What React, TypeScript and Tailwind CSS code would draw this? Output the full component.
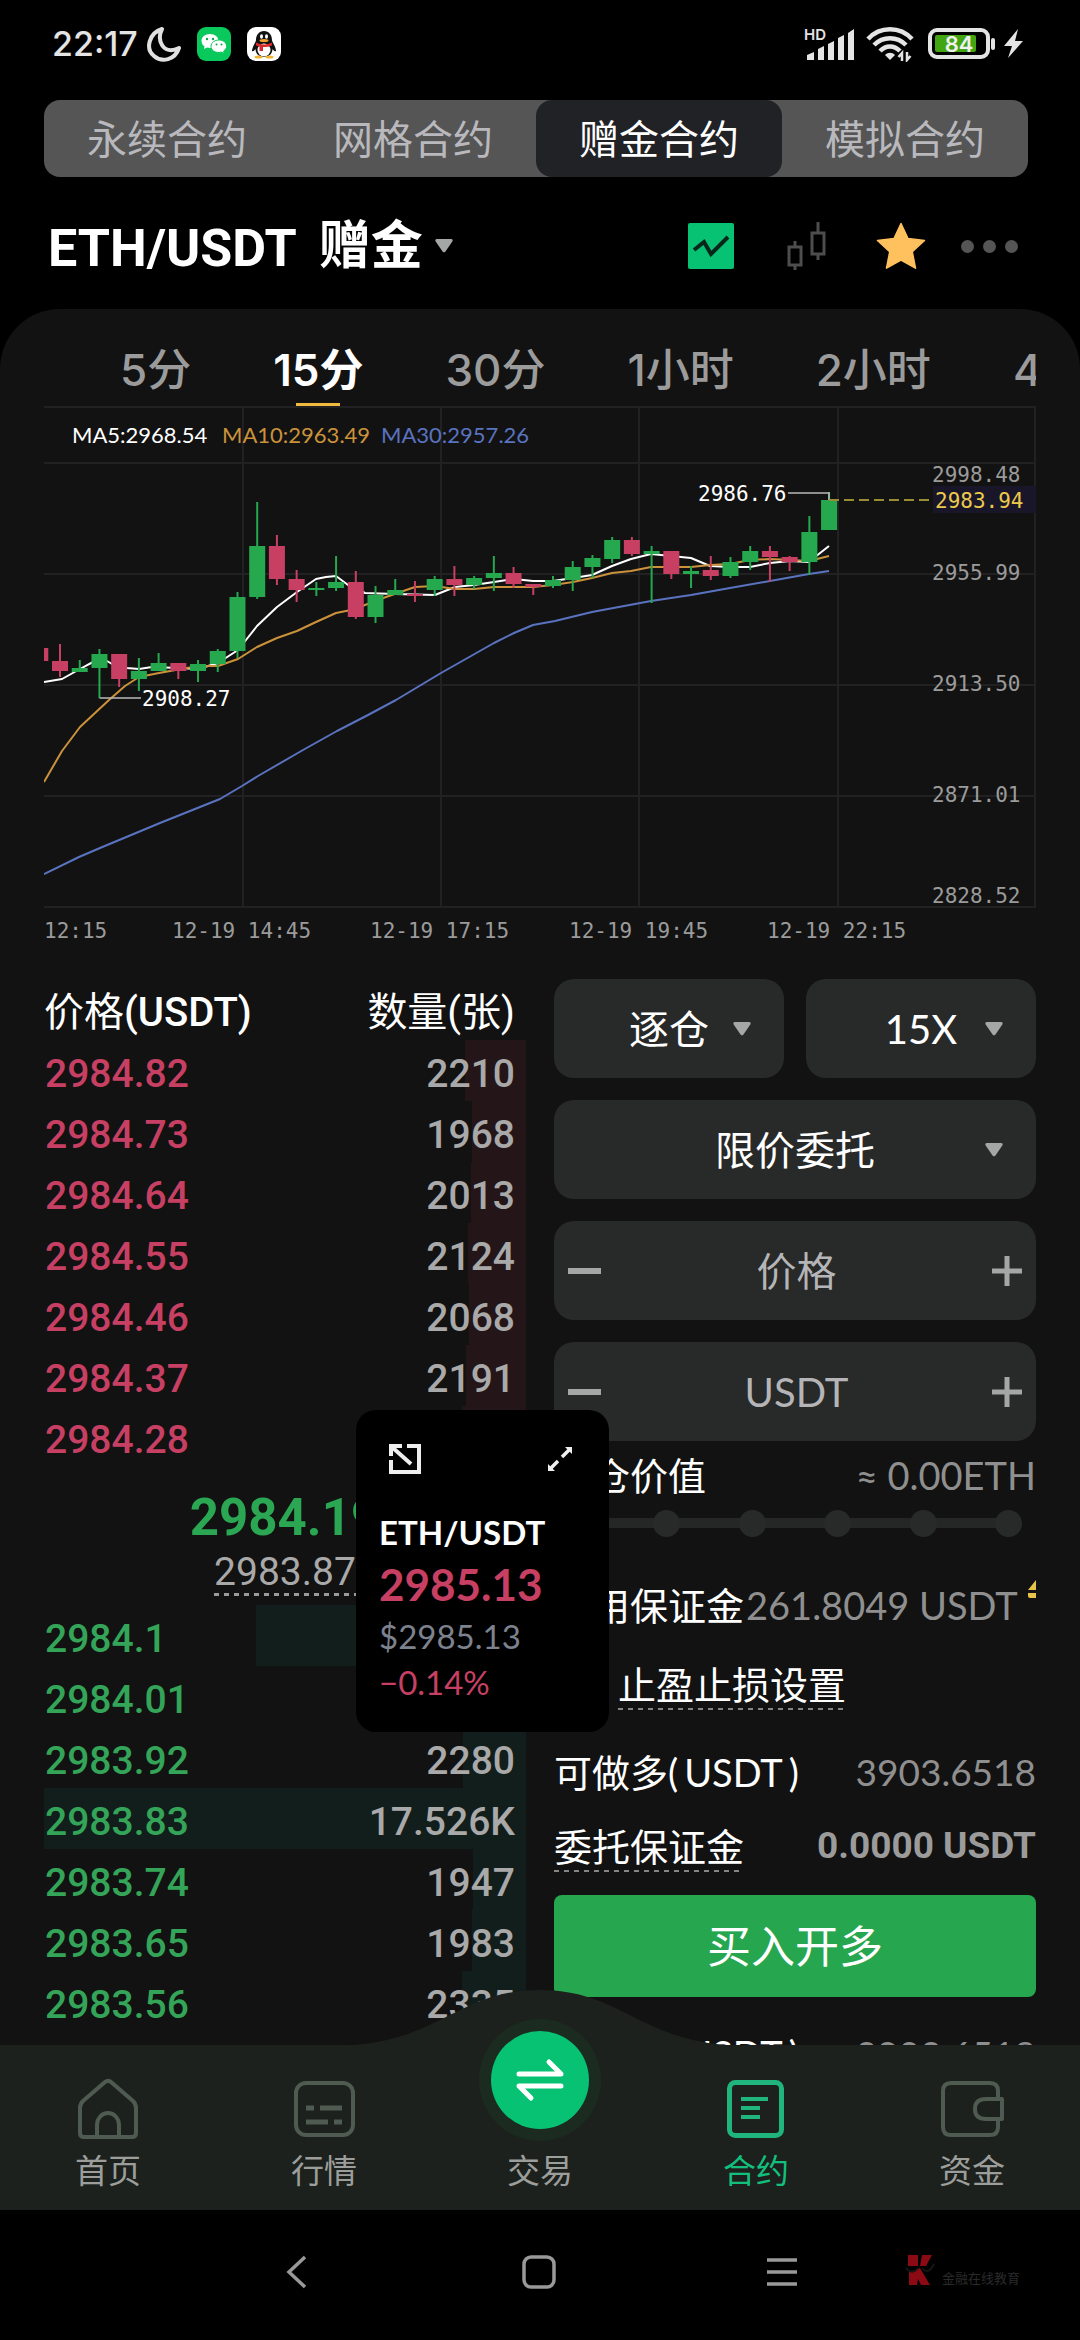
import React from "react";

type Level = { price: string; amount: string; depth: number };

const asks: Level[] = [
  { price: "2984.82", amount: "2210", depth: 12.6 },
  { price: "2984.73", amount: "1968", depth: 11.2 },
  { price: "2984.64", amount: "2013", depth: 11.5 },
  { price: "2984.55", amount: "2124", depth: 12.1 },
  { price: "2984.46", amount: "2068", depth: 11.8 },
  { price: "2984.37", amount: "2191", depth: 12.5 },
  { price: "2984.28", amount: "", depth: 13.3 },
];

const bids: Level[] = [
  { price: "2984.1", amount: "", depth: 56 },
  { price: "2984.01", amount: "", depth: 12 },
  { price: "2983.92", amount: "2280", depth: 13 },
  { price: "2983.83", amount: "17.526K", depth: 100 },
  { price: "2983.74", amount: "1947", depth: 11 },
  { price: "2983.65", amount: "1983", depth: 11.2 },
  { price: "2983.56", amount: "2335", depth: 13.3 },
];

// up, wick top, body top, body bottom, wick bottom
const candles: [boolean, number, number, number, number][] = [
  [false, 648, 648, 661, 661],
  [false, 644, 661, 671, 677],
  [true, 660, 668, 672, 672],
  [true, 649, 654, 668, 698],
  [false, 654, 654, 679, 687],
  [true, 658, 671, 679, 691],
  [true, 653, 663, 671, 671],
  [false, 663, 663, 671, 679],
  [true, 660, 664, 671, 682],
  [true, 649, 651, 664, 672],
  [true, 592, 597, 651, 658],
  [true, 502, 546, 597, 599],
  [false, 535, 546, 579, 585],
  [false, 570, 579, 590, 602],
  [true, 582, 588, 590, 596],
  [true, 556, 582, 588, 591],
  [false, 571, 582, 617, 619],
  [true, 586, 595, 617, 623],
  [true, 579, 590, 595, 595],
  [false, 581, 594, 596, 602],
  [true, 576, 579, 590, 596],
  [false, 566, 579, 585, 596],
  [true, 576, 578, 585, 589],
  [true, 556, 573, 578, 591],
  [false, 567, 573, 584, 588],
  [false, 584, 584, 587, 595],
  [true, 576, 580, 586, 588],
  [true, 561, 567, 580, 591],
  [true, 555, 558, 567, 578],
  [true, 537, 540, 559, 563],
  [false, 537, 540, 554, 556],
  [true, 546, 551, 554, 603],
  [false, 551, 551, 574, 579],
  [true, 566, 571, 574, 588],
  [false, 556, 570, 576, 580],
  [true, 557, 562, 576, 578],
  [true, 546, 551, 562, 570],
  [false, 546, 551, 557, 582],
  [false, 556, 557, 562, 571],
  [true, 516, 532, 562, 575],
  [true, 492, 500, 530, 530],
];

const ma5 =
  "44,682 62,679 80,669 93,662 107,661 112,664 127,668 139,669 152,667 179,668 198,669 218,663 238,650 246,640 257,626 277,607 297,592 316,579 326,577 336,576 348,585 365,593 395,594 435,595 455,587 474,585 494,582 514,579 533,581 553,581 573,578 592,575 612,566 631,559 651,554 671,556 691,558 710,566 730,567 750,567 770,563 790,561 809,562 815,557 829,546";
const ma10 =
  "44,782 62,751 80,727 95,713 109,700 125,686 139,677 159,673 198,666 218,666 238,659 257,647 277,638 297,631 316,622 336,613 356,609 365,605 386,597 415,587 435,586 455,589 474,589 494,587 533,587 553,585 573,582 592,578 612,573 631,571 651,567 691,567 710,565 730,564 750,560 770,559 790,560 809,561 829,556";
const ma30 =
  "44,874 79,857 100,848 160,823 220,799 242,786 258,776 303,750 337,731 368,715 396,700 441,673 494,643 514,633 533,625 555,621 592,612 651,601 691,595 730,588 770,581 809,574 829,571";

const MONO = '"DejaVu Sans Mono", monospace';

function Chart() {
  return (
    <svg viewBox="44 406 992 549" className="block w-full" role="img" aria-label="ETH/USDT 15分">
      <g stroke="#212124" strokeWidth="2">
        {[407, 463, 574, 685, 796, 907].map((y) => (
          <line key={y} x1="44" x2="1036" y1={y} y2={y} />
        ))}
        {[243, 441, 639, 838, 1035].map((x) => (
          <line key={x} x1={x} x2={x} y1="407" y2="907" />
        ))}
      </g>
      <g fontFamily='Lato, "Noto Sans CJK SC", sans-serif' fontSize="22">
        <text x="72" y="443" fill="#ffffff">MA5:2968.54</text>
        <text x="222" y="443" fill="#cb923b">MA10:2963.49</text>
        <text x="381" y="443" fill="#5a73c0">MA30:2957.26</text>
      </g>
      <g fill="none" strokeWidth="2" strokeLinejoin="round">
        <polyline points={ma5} stroke="#ffffff" />
        <polyline points={ma10} stroke="#cb923b" />
        <polyline points={ma30} stroke="#5a73c0" />
      </g>
      {candles.map(([up, wt, bt, bb, wb], i) => {
        const x = 60 + 19.72 * (i - 1);
        const c = up ? "#26a84f" : "#c74063";
        return (
          <g key={i} fill={c}>
            {i > 0 && <rect x={x - 1} y={wt} width="2" height={wb - wt} />}
            <rect x={x - 8} y={bt} width="16" height={Math.max(bb - bt, 2)} />
          </g>
        );
      })}
      <path d="M99.500 698H141M788 493H829V500" fill="none" stroke="#b9b9b9" strokeWidth="1.500" />
      <path d="M829 500H931" stroke="#9c8b35" strokeWidth="2" strokeDasharray="10 5" />
      <rect x="933" y="486" width="103" height="27" fill="#1a1629" />
      <g fontFamily={MONO} fontSize="21">
        <g fill="#ffffff">
          <text x="142" y="706">2908.27</text>
          <text x="698" y="501">2986.76</text>
        </g>
        <text x="935" y="508" fill="#ecc94b">2983.94</text>
        <g fill="#9b9b9b">
          <text x="932" y="482">2998.48</text>
          <text x="932" y="580">2955.99</text>
          <text x="932" y="691">2913.50</text>
          <text x="932" y="802">2871.01</text>
          <text x="932" y="903">2828.52</text>
          <text x="44" y="938">12:15</text>
          <text x="172" y="938">12-19 14:45</text>
          <text x="370" y="938">12-19 17:15</text>
          <text x="569" y="938">12-19 19:45</text>
          <text x="767" y="938">12-19 22:15</text>
        </g>
      </g>
    </svg>
  );
}

function StatusBar() {
  return (
    <div className="flex h-[100px] items-start justify-between pt-[24px] pr-[56px] pl-[52px]">
      <div className="flex items-center">
        <span className="text-[34px] leading-10 font-medium text-[#e4e4e4]">22:17</span>
        <svg className="ml-2 h-9 w-9" viewBox="0 0 36 36" fill="none" stroke="#e0e0e0" strokeWidth="4" strokeLinejoin="round">
          <path d="M16 3C3 7-1 23 8 30c8 7 21 4 25-8-8 4-14 2-17-3s-3-10 0-16z" />
        </svg>
        <svg className="ml-3.5 h-9 w-9" viewBox="0 0 36 36">
          <rect x="1" y="1" width="34" height="34" rx="9" fill="#09c85c" />
          <path d="M14 8c-5 0-8.500 3-8.500 7 0 2 1 4 3 5.200L8 23l3-1.500 3 .5c5 0 8.500-3 8.500-7S19 8 14 8z" fill="#fff" />
          <path d="M23 14c-4.500 0-8 2.700-8 6.300S18.500 26.500 23 26.500l2.400-.4 2.800 1.400-.6-2.500c1.900-1.200 3-2.800 3-4.700C30.600 16.700 27.300 14 23 14z" fill="#fff" stroke="#09c85c" strokeWidth="1" />
          <g fill="#09a84e">
            <circle cx="11" cy="13" r="1.200" /><circle cx="17" cy="13" r="1.200" />
            <circle cx="20.500" cy="18.500" r="1" /><circle cx="25.500" cy="18.500" r="1" />
          </g>
        </svg>
        <svg className="ml-3.5 h-9 w-9" viewBox="0 0 36 36">
          <rect x="1" y="1" width="34" height="34" rx="9" fill="#fff" />
          <path d="M18 5c-5 0-8 4-8 9 0 2-4 7-4 11 1.500 1 2.500-1 3.500-2 0 5 4 8 8.500 8s8.500-3 8.500-8c1 1 2 3 3.500 2 0-4-4-9-4-11 0-5-3-9-8-9z" fill="#111" />
          <ellipse cx="18" cy="24" rx="6.500" ry="6.500" fill="#fff" />
          <ellipse cx="12.500" cy="31" rx="4" ry="1.500" fill="#f2b632" />
          <ellipse cx="23.500" cy="31" rx="4" ry="1.500" fill="#f2b632" />
          <ellipse cx="15.500" cy="10.500" rx="1.500" ry="2.200" fill="#fff" />
          <ellipse cx="20.500" cy="10.500" rx="1.500" ry="2.200" fill="#fff" />
          <ellipse cx="18" cy="14.500" rx="4.500" ry="1.500" fill="#f2a032" />
          <path d="M10 16.500c5 2.500 11 2.500 16 0v3c-3 1.300-6 1.800-9 1.500v4h-3.500v-4.500L10 19.500z" fill="#d8282c" />
        </svg>
      </div>
      <div className="flex items-center pt-0.5">
        <svg className="h-9 w-[52px]" viewBox="0 0 52 36">
          <text x="0" y="14" fontFamily="Inter, sans-serif" fontSize="15" fontWeight="600" fill="#e4e4e4">HD</text>
          <g fill="#e4e4e4">
            <path d="M3 29l7-3v8H3zM14 23l6-3v14h-6zM24 18l6-3v19h-6zM34 12l6-3v25h-6zM44 7l6-4v31h-6z" />
          </g>
        </svg>
        <svg className="ml-2.5 h-9 w-12" viewBox="0 0 48 36">
          <g fill="none" stroke="#e4e4e4" strokeWidth="4.500">
            <path d="M2 13c12-13 32-13 44 0" />
            <path d="M8 19c9-9 23-9 32 0" />
            <path d="M14 25c6-6 14-6 20 0" />
          </g>
          <path d="M24 34l-5-5c3-3 7-3 10 0z" fill="#e4e4e4" />
          <path d="M36 35v-8l-3.500 4M41 26v8l3.500-4" fill="none" stroke="#e4e4e4" strokeWidth="2.500" />
        </svg>
        <svg className="ml-3 h-9 w-[98px]" viewBox="0 0 98 36">
          <rect x="4" y="4" width="58" height="27" rx="7" fill="none" stroke="#e4e4e4" strokeWidth="4" />
          <rect x="9" y="9" width="41" height="17" rx="2" fill="#43a512" />
          <path d="M67 14v8" stroke="#e4e4e4" strokeWidth="4" strokeLinecap="round" />
          <text x="33" y="26" textAnchor="middle" fontFamily="Inter, sans-serif" fontSize="22" fontWeight="600" fill="#f0f0f0">84</text>
          <path d="M92 3L78 20h8l-4 12 15-17h-8z" fill="#e4e4e4" />
        </svg>
      </div>
    </div>
  );
}

function Caret() {
  return (
    <svg className="h-3.5 w-[18px]" viewBox="0 0 18 14" aria-hidden="true">
      <path d="M1.500 0h15q1.800.6.800 2.400L10.500 12.600q-1.500 1.600-3 0L.7 2.400Q-.3.600 1.500 0z" fill="#a5a6a6" />
    </svg>
  );
}

function Picker({ label, options }: { label: string; options: string[] }) {
  return (
    <div className="relative h-[99px] min-w-0 flex-1">
      <select
        aria-label={label}
        className="h-full w-full appearance-none rounded-[20px] bg-[#282929] text-[40px] text-white outline-none [text-align-last:center]"
      >
        {options.map((o) => (
          <option key={o}>{o}</option>
        ))}
      </select>
      <span className="pointer-events-none absolute inset-y-0 right-[33px] flex items-center">
        <Caret />
      </span>
    </div>
  );
}

function Stepper({ label }: { label: string }) {
  return (
    <div className="flex h-[99px] items-center rounded-[20px] bg-[#282929] px-3.5">
      <button aria-label={"减少" + label} className="h-[6px] w-[33px] shrink-0 bg-[#a5a6a6]" />
      <input
        aria-label={label}
        placeholder={label}
        className="h-full min-w-0 flex-1 bg-transparent text-center text-[40px] text-white outline-none placeholder:text-[#b5b5b8]"
      />
      <button aria-label={"增加" + label} className="shrink-0">
        <svg className="h-[30px] w-[30px]" viewBox="0 0 30 30">
          <path d="M15 0v30M0 15h30" stroke="#a5a6a6" strokeWidth="5" />
        </svg>
      </button>
    </div>
  );
}

function Row({ level, side }: { level: Level; side: "ask" | "bid" }) {
  return (
    <tr className="relative flex h-[61px] items-center justify-between pt-1.5 pr-[11px] pl-px">
      <td className={side === "ask" ? "relative z-10 text-[#c74063]" : "relative z-10 text-[#34a558]"}>{level.price}</td>
      <td className="relative z-10 text-[#a9a9a9]">{level.amount}</td>
      <td
        aria-hidden="true"
        className={
          side === "ask"
            ? "absolute inset-y-0 right-0 bg-[#241618]"
            : "absolute inset-y-0 right-0 bg-[#121e1b]"
        }
        style={{ width: level.depth + "%" }}
      />
    </tr>
  );
}

function Dashes({ thick = false }: { thick?: boolean }) {
  return (
    <span
      className={
        thick
          ? "absolute inset-x-0 bottom-0 h-[3px] bg-[repeating-linear-gradient(90deg,#9a9a9a_0_5px,transparent_5px_10px)]"
          : "absolute inset-x-0 bottom-0 h-[2px] bg-[repeating-linear-gradient(90deg,#858585_0_5px,transparent_5px_10px)]"
      }
    />
  );
}

function OrderBook() {
  return (
    <section className="min-w-0 font-[Roboto,'Noto_Sans_CJK_SC',sans-serif] text-[39px] leading-[56px] font-medium">
      <table className="block w-full">
        <thead className="block">
          <tr className="flex h-[61px] items-center justify-between pt-1.5 pr-[11px] text-[40px] text-white">
            <th className="font-normal">价格<span className="font-medium">(USDT)</span></th>
            <th className="font-normal">数量(张)</th>
          </tr>
        </thead>
        <tbody className="block">
          {asks.map((l) => <Row key={l.price} level={l} side="ask" />)}
        </tbody>
      </table>
      <div className="flex h-[138px] flex-col items-center pt-[21px]">
        <span className="text-[51px] leading-[60px] font-bold text-[#2ba653]">2984.19</span>
        <span className="relative h-12 leading-[48px] font-normal text-[#a9a9a9]">
          2983.87
          <Dashes thick />
        </span>
      </div>
      <table className="block w-full">
        <tbody className="block">
          {bids.map((l) => <Row key={l.price} level={l} side="bid" />)}
        </tbody>
      </table>
    </section>
  );
}

function OrderForm() {
  return (
    <form className="min-w-0 text-[38px] leading-[52px] text-white" onSubmit={(e) => e.preventDefault()}>
      <div className="flex flex-col gap-[22px]">
        <div className="flex gap-[22px]">
          <Picker label="保证金模式" options={["逐仓", "全仓"]} />
          <Picker label="杠杆" options={["15X", "20X"]} />
        </div>
        <div className="flex">
          <Picker label="委托类型" options={["限价委托", "市价委托"]} />
        </div>
        <Stepper label="价格" />
        <Stepper label="USDT" />
      </div>
      <div className="flex h-[68px] items-center justify-between">
        <span>开仓价值</span>
        <span className="text-[#8f8f8f]">≈ 0.00ETH</span>
      </div>
      <div className="relative mr-3.5 ml-3.5 flex h-7 items-center justify-between">
        <span className="absolute inset-x-3 h-2.5 bg-[#252727]" />
        {[0, 20, 40, 60, 80, 100].map((n) => (
          <span key={n} className="relative h-[27px] w-[27px] rounded-full bg-[#282a2a]" />
        ))}
        <input type="range" aria-label="仓位比例" defaultValue={0} className="absolute inset-0 w-full opacity-0" />
      </div>
      <div className="mt-[42px] flex h-[52px] items-center overflow-hidden whitespace-nowrap">
        <span>可用保证金</span>
        <span className="ml-0.5 text-[#8f8f8f]">261.8049 USDT</span>
        <svg className="ml-auto h-[52px] w-2 shrink-0" viewBox="0 0 8 52">
          <path d="M8 1v10H0zM0 14h8v5H2q-2 0-2-2z" fill="#e6c34a" />
        </svg>
      </div>
      <div className="mt-[27px] flex h-[52px] items-center gap-4 pl-1">
        <input id="tpsl" type="checkbox" className="h-11 w-11 appearance-none rounded-md border-2 border-[#5a5a5a]" />
        <label htmlFor="tpsl" className="relative h-[52px]">
          止盈止损设置
          <Dashes />
        </label>
      </div>
      <div className="mt-9 flex h-[52px] items-center justify-between">
        <span>可做多(<span className="mx-1.5">USDT</span>)</span>
        <span className="text-[37px] text-[#8f8f8f]">3903.6518</span>
      </div>
      <div className="mt-[22px] flex h-[52px] items-center justify-between">
        <span className="relative h-[52px]">
          委托保证金
          <Dashes />
        </span>
        <span className="font-[Roboto] text-[37px] font-bold text-[#9b9b9b]">0.0000 USDT</span>
      </div>
      <button className="mt-[23px] h-[102px] w-full rounded-lg bg-[#27a650] text-[44px] text-white">买入开多</button>
      <div className="mt-[31px] flex h-[52px] items-center justify-between">
        <span>可做空(<span className="mx-1.5">USDT</span>)</span>
        <span className="text-[37px] text-[#8f8f8f]">3903.6518</span>
      </div>
    </form>
  );
}

function FloatingTicker() {
  return (
    <aside className="absolute top-[1410px] left-[356px] z-20 h-[322px] w-[253px] rounded-[20px] bg-black px-[23px] font-[Lato,'Noto_Sans_CJK_SC',sans-serif]">
      <div className="flex h-[98px] items-center justify-between pr-3 pl-2.5">
        <button aria-label="返回应用">
          <svg className="h-8 w-8" viewBox="0 0 32 32" fill="none" stroke="#eee" strokeWidth="4">
            <path d="M2 17v12h28V3H18M2 13V3h11M4 5l18 16" />
          </svg>
        </button>
        <button aria-label="展开">
          <svg className="h-7 w-7" viewBox="0 0 28 28" stroke="#eee" strokeWidth="3.500" fill="none">
            <path d="M16 12l8-8M12 16l-8 8" />
            <path d="M19 2h7v7zM2 19v7h7z" fill="#eee" stroke="none" />
          </svg>
        </button>
      </div>
      <p className="text-[33px] leading-[48px] font-bold text-white">ETH/USDT</p>
      <p className="text-[44px] leading-[56px] font-bold text-[#c74063]">2985.13</p>
      <p className="text-[33px] leading-[48px] text-[#7d828f]">$2985.13</p>
      <p className="text-[33px] leading-[44px] text-[#c74063]">−0.14%</p>
    </aside>
  );
}

function NavItem({ label, active, children }: { label: string; active?: boolean; children?: React.ReactNode }) {
  return (
    <a href="#" className="relative flex flex-1 flex-col items-center pt-8">
      <svg
        className="h-16 w-16"
        viewBox="0 0 64 64"
        fill="none"
        stroke={active ? "#1fb57c" : "#4f5a51"}
        strokeWidth={active ? 5 : 4}
        strokeLinejoin="round"
      >
        {children}
      </svg>
      <span className={active ? "mt-1.5 text-[33px] leading-[48px] text-[#12bf7c]" : "mt-1.5 text-[33px] leading-[48px] text-[#9c9e9c]"}>
        {label}
      </span>
    </a>
  );
}

function BottomNav() {
  return (
    <nav className="relative z-10 flex h-[165px] shrink-0 bg-[#1c211d]">
      <svg className="absolute -top-[55px] left-1/2 h-14 w-[420px] -translate-x-1/2" viewBox="0 0 420 56">
        <path d="M0 56C110 56 125 0 210 0s100 56 210 56z" fill="#1c211d" />
      </svg>
      <NavItem label="首页">
        <path d="M33 5Q31 3 29 5L7 24Q4 27 4 31V56Q4 60 8 60H56Q60 60 60 56V31Q60 27 57 24L35 5Q33 3 31 4" />
        <path d="M21 60V48a11 12 0 0 1 22 0V60" />
      </NavItem>
      <NavItem label="行情">
        <rect x="4" y="6" width="57" height="52" rx="10" />
        <path d="M14 31h8M28 31h22M14 45h22M42 45h8" strokeWidth="5" />
      </NavItem>
      <NavItem label="交易" />
      <NavItem label="合约" active>
        <rect x="5.500" y="5.500" width="52" height="53" rx="6" />
        <path d="M17 22h27M17 31h19M17 40h19" strokeWidth="4" />
      </NavItem>
      <NavItem label="资金">
        <path d="M58 21V14Q58 6 50 6H11Q3 6 3 14V50Q3 58 11 58H50Q58 58 58 50V43" />
        <path d="M62 22H46Q35 22 35 32T46 42H62z" />
      </NavItem>
      <button
        aria-label="交易"
        className="absolute -top-[26px] left-1/2 flex h-[122px] w-[122px] -translate-x-1/2 items-center justify-center rounded-full bg-[#1c2b20]"
      >
        <span className="flex h-[98px] w-[98px] items-center justify-center rounded-full bg-[#08c274]">
          <svg className="h-12 w-[52px]" viewBox="0 0 52 48" fill="none" stroke="#fff" strokeWidth="5" strokeLinecap="round" strokeLinejoin="round">
            <path d="M5 18H47L35 6M47 30H5L17 42" />
          </svg>
        </span>
      </button>
    </nav>
  );
}

function SystemNav() {
  return (
    <div className="relative flex h-[130px] shrink-0 items-start bg-black pt-11">
      <div className="grid w-full grid-cols-3 justify-items-center pr-[176px] pl-[174px]">
        <button aria-label="返回">
          <svg className="h-9 w-9" viewBox="0 0 36 36" fill="none" stroke="#999" strokeWidth="3.500">
            <path d="M27 3L11 18l16 15" />
          </svg>
        </button>
        <button aria-label="主屏幕">
          <svg className="h-9 w-9" viewBox="0 0 36 36" fill="none" stroke="#999" strokeWidth="3.500">
            <rect x="3" y="3" width="30" height="30" rx="7" />
          </svg>
        </button>
        <button aria-label="最近任务">
          <svg className="h-9 w-9" viewBox="0 0 36 36" fill="none" stroke="#999" strokeWidth="3.500">
            <path d="M3 6h30M3 18h30M3 30h30" />
          </svg>
        </button>
      </div>
      <div className="absolute top-[42px] right-[60px] flex items-end gap-1.5">
        <svg className="h-9 w-8" viewBox="0 0 32 36" fill="#8c0a14">
          <path d="M4 3h10v11H4zM18 3h10l-6 11h-6zM5 20l11-4 10 17H17l-3-6-1 6H5z" />
          <path d="M2 16c4 5 8 5 12 0M18 16c4 5 8 4 12-4" fill="none" stroke="#151515" strokeWidth="2" />
        </svg>
        <span className="text-[13px] leading-5 text-[#2a2a2a]">金融在线教育</span>
      </div>
    </div>
  );
}

export default function App() {
  const modes = ["永续合约", "网格合约", "赠金合约", "模拟合约"];
  const periods = ["5分", "15分", "30分", "1小时", "2小时", "4小时"];
  return (
    <div className="relative flex h-screen flex-col overflow-hidden bg-black font-[Inter,'Noto_Sans_CJK_SC',sans-serif]">
      <StatusBar />
      <div className="mr-[52px] ml-11 flex h-[77px] shrink-0 rounded-2xl bg-[#555556]">
        {modes.map((m) => (
          <button
            key={m}
            className={
              m === "赠金合约"
                ? "flex-1 rounded-2xl bg-[#212226] pt-0.5 text-[40px] text-white"
                : "flex-1 pt-0.5 text-[40px] text-[#b9b9bd]"
            }
          >
            {m}
          </button>
        ))}
      </div>
      <header className="flex h-[132px] shrink-0 items-center justify-between pt-1.5 pr-[62px] pl-12">
        <button className="flex items-center font-[Roboto,'Noto_Sans_CJK_SC',sans-serif] text-[52px] leading-[60px] font-bold text-white">
          <h1 className="pt-1.5">ETH/USDT</h1>
          <span className="ml-[22px] pt-0.5">赠金</span>
          <span className="ml-3"><Caret /></span>
        </button>
        <div className="flex items-center">
          <button aria-label="分时图">
            <svg className="h-[46px] w-[46px]" viewBox="0 0 46 46">
              <rect width="46" height="46" rx="2" fill="#08c274" />
              <path d="M6 27l10-8 7 12 17-17" fill="none" stroke="#06281a" strokeWidth="4" />
            </svg>
          </button>
          <button aria-label="K线" className="ml-[52px]">
            <svg className="h-12 w-10" viewBox="0 0 40 48" fill="none" stroke="#4d4d4d" strokeWidth="3">
              <path d="M3 25h12v18H3zM26 11h12v21H26zM9 19v6M9 43v5M32 0v11M32 32v6" />
            </svg>
          </button>
          <button aria-label="收藏" className="ml-[50px]">
            <svg className="h-12 w-[50px]" viewBox="0 0 50 48">
              <path d="M25 1.500l7 15 16.500 2L36.300 29.800l3.200 16.400L25 38l-14.500 8.200 3.200-16.400L1.500 18.500l16.500-2z" fill="#ffc05e" stroke="#ffc05e" strokeWidth="1.500" strokeLinejoin="round" />
            </svg>
          </button>
          <button aria-label="更多" className="ml-[35px] flex gap-[9px]">
            <span className="h-[13px] w-[13px] rounded-full bg-[#555]" />
            <span className="h-[13px] w-[13px] rounded-full bg-[#555]" />
            <span className="h-[13px] w-[13px] rounded-full bg-[#555]" />
          </button>
        </div>
      </header>
      <main className="isolate min-h-0 flex-1 overflow-hidden rounded-t-[60px] bg-[#121212] px-11">
        <div className="flex h-[97px] gap-[82px] overflow-hidden pl-[76px]" role="tablist">
          {periods.map((p) => (
            <button
              key={p}
              role="tab"
              aria-selected={p === "15分"}
              className={
                p === "15分"
                  ? "relative shrink-0 pt-6 text-[44px] font-semibold text-white"
                  : "relative shrink-0 pt-6 text-[44px] font-medium text-[#9b9b9b]"
              }
            >
              {p}
              {p === "15分" && <span className="absolute bottom-0 left-1/2 h-[3px] w-11 -translate-x-1/2 bg-[#f0b93f]" />}
            </button>
          ))}
        </div>
        <Chart />
        <div className="mt-6 grid grid-cols-2 gap-7 font-[Lato,'Noto_Sans_CJK_SC',sans-serif]">
          <OrderBook />
          <OrderForm />
        </div>
      </main>
      <BottomNav />
      <SystemNav />
      <FloatingTicker />
    </div>
  );
}
